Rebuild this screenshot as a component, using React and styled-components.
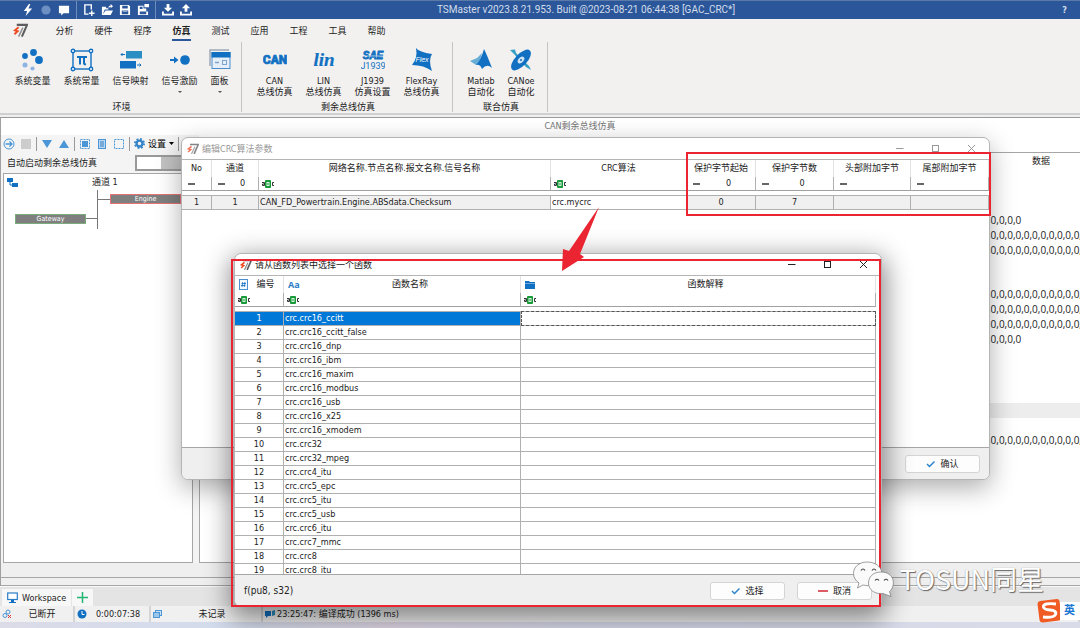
import React from "react"
import styled, { createGlobalStyle } from "styled-components";

const blue = "#1170c2";
const lightBlue = "#4a96d6";
const red = "#ea2430";

const GlobalStyle = createGlobalStyle`
  * { box-sizing: border-box; }
  body {
    margin: 0;
    overflow: hidden;
    background: #efefef;
    color: #222;
    font: 9px/14px "DejaVu Sans Condensed", "Open Sans", "Noto Sans CJK SC", sans-serif;
  }
  button, input { font: inherit; color: inherit; }
  button {
    margin: 0;
    padding: 0;
    border: 0;
    background: none;
  }
  svg { display: block; flex: none; }
`;

const Page = styled.div`
  position: relative;
  display: flex;
  flex-direction: column;
  min-height: 100vh;
  overflow: hidden;
`;

/* title bar */

const TitleBar = styled.header`
  display: flex;
  align-items: center;
  height: 19px;
  background: #2b579a;
  border-top: 1px solid #5b7aa8;
  color: #d3ddec;
`;

const QuickTools = styled.div`
  display: flex;
  align-items: center;
  height: 18px;
  gap: 4px;
  padding: 0 5px;
  border-right: ${p => (p.$last ? "0" : "1px solid #6d8bbb")};
  &:first-child { padding-left: 21px; }
`;

const QuickButton = styled.button`
  display: flex;
  justify-content: center;
  width: 14px;
`;

const AppTitle = styled.h1`
  flex: 1;
  margin: 0;
  font: 400 10px/14px Roboto, "Noto Sans CJK SC", sans-serif;
  text-align: center;
  white-space: nowrap;
`;

const Help = styled.button`
  width: 106px;
  padding-right: 13px;
  font-weight: 700;
  text-align: right;
`;

/* ribbon */

const TabRow = styled.nav`
  display: flex;
  align-items: center;
  height: 23px;
  padding-left: 13px;
  background: #f2f1f0;
`;

const Tabs = styled.div`
  display: flex;
  margin-left: 17px;
`;

const Tab = styled.button`
  display: flex;
  justify-content: center;
  width: 39px;
  padding-top: 3px;
  font-weight: ${p => (p.$active ? 700 : 400)};
  span {
    line-height: 16px;
    border-bottom: 2px solid ${p => (p.$active ? "#2b579a" : "transparent")};
  }
`;

const Ribbon = styled.section`
  display: flex;
  height: 73px;
  background: #f2f1f0;
  border-bottom: 2px solid #d0d0d0;
`;

const RibbonGroup = styled.div`
  display: flex;
  flex-direction: column;
  justify-content: space-between;
  height: 70px;
  padding: 6px 6px 0 8px;
  border-right: 1px solid #c4c4c4;
  text-align: center;
`;

const RibbonItems = styled.div`
  display: flex;
`;

const RibbonItem = styled.button`
  display: flex;
  flex-direction: column;
  align-items: center;
  width: ${p => p.$width || 49}px;
  line-height: 11px;
  white-space: pre-line;
  svg { margin-bottom: 4px; }
`;

const Caret = styled.i`
  margin-top: 4px;
  border: 2px solid transparent;
  border-top-color: #555;
  border-bottom: 0;
`;

const GroupName = styled.div`
  line-height: 10px;
`;

/* work area */

const Main = styled.main`
  display: flex;
  flex: 1;
  flex-direction: column;
  background: #fff;
  border-top: 1px solid #9a9a9a;
  border-left: 1px solid #a0a0a0;
  margin-top: 2px;
`;

const Caption = styled.h2`
  margin: 0;
  padding-left: 79px;
  font-size: 9px;
  font-weight: 400;
  line-height: 17px;
  color: #777;
  text-align: center;
`;

const Panes = styled.div`
  display: flex;
  flex: 1;
  gap: 6px;
  background: #f4f4f4;
`;

const Side = styled.div`
  display: flex;
  flex-direction: column;
  width: 192px;
  padding-left: 2px;
`;

const Toolbar = styled.div`
  display: flex;
  align-items: center;
  height: 17px;
`;

const ToolGroup = styled.div`
  display: flex;
  align-items: center;
  gap: 5px;
  height: 14px;
  padding: 0 4px;
  border-right: 1px solid #999;
  &:first-child { padding-left: 0; }
`;

const ToolButton = styled.button`
  display: flex;
  align-items: center;
  gap: 3px;
  color: #000;
`;

const SwitchLabel = styled.label`
  display: flex;
  align-items: center;
  justify-content: space-between;
  height: 21px;
  padding: 0 0 0 4px;
`;

const Switch = styled.input`
  appearance: none;
  width: 58px;
  height: 16px;
  margin: 0;
  border: 2px solid #999;
  background: linear-gradient(90deg, #fff 24px, #c2c2c2 24px);
`;

const Diagram = styled.div`
  position: relative;
  flex: 1;
  border: 1px solid #a6a6a6;
  background: #fff;
  overflow: hidden;
`;

const ChannelName = styled.span`
  position: absolute;
  left: 88px;
  top: 1px;
`;

const TreeIcon = styled.svg`
  position: absolute;
  left: 3px;
  top: 4px;
`;

const Wires = styled.svg`
  position: absolute;
  left: 82px;
  top: 16px;
`;

const Node = styled.div`
  position: absolute;
  left: ${p => p.$x}px;
  top: ${p => p.$y}px;
  width: 71px;
  height: 10px;
  border: 1px solid ${p => p.$edge};
  background: #7f7f7f;
  color: #fff;
  font-size: 7px;
  line-height: 8px;
  text-align: center;
`;

const DataPane = styled.div`
  display: flex;
  flex: 1;
  flex-direction: column;
  padding-top: 17px;
  overflow: hidden;
  background: #fff;
`;

const DataBox = styled.div`
  display: flex;
  flex: 1;
  flex-direction: column;
  border: 1px solid #a6a6a6;
  border-right: 0;
`;

const DataHead = styled.div`
  align-self: flex-end;
  width: 91px;
  padding-left: 13px;
  margin-bottom: 43px;
  line-height: 17px;
  text-align: center;
`;

const DataRows = styled.div`
  padding-left: calc(100% - 92px);
  margin-bottom: ${p => p.$after}px;
  font: 10px/15px "Open Sans", sans-serif;
  white-space: nowrap;
  background: ${p => (p.$band ? "#ededed" : "none")};
  min-height: 15px;
`;

const Splitter = styled.div`
  height: ${p => p.$height}px;
  background: #efefef;
  border-bottom: 1px solid #a6a6a6;
`;

/* bottom bars */

const WorkspaceBar = styled.div`
  display: flex;
  height: 20px;
  padding: 2px 0 0 2px;
  gap: 1px;
  background: #e4e4e4;
  border-top: 1px solid #f8f8f8;
`;

const WorkspaceTab = styled.button`
  display: flex;
  align-items: center;
  gap: 4px;
  padding: 0 5px;
  background: #f7f7f7;
`;

const StatusBar = styled.footer`
  display: flex;
  height: 16px;
  background: #f0f0f0;
`;

const StatusCell = styled.div`
  display: flex;
  align-items: center;
  width: ${p => (p.$width ? p.$width + "px" : "auto")};
  flex: ${p => (p.$width ? "none" : 1)};
  gap: 2px;
  padding: 0 2px;
  border-right: 2px solid #d4d4d4;
  span {
    flex: ${p => (p.$width ? 1 : "none")};
    text-align: center;
    white-space: nowrap;
  }
`;

const Taskbar = styled.div`
  height: 6px;
  background: linear-gradient(90deg, #dcdbe8, #d3dcec 20%, #e0d8e6 36%, #d6d9ea 55%, #dadbe8);
`;

/* windows */

const Window = styled.section`
  position: absolute;
  left: ${p => p.$left}px;
  right: ${p => p.$right}px;
  top: ${p => p.$top}px;
  display: flex;
  flex-direction: column;
  overflow: hidden;
  border: 1px solid #b4b4b4;
  border-radius: 7px;
  background: #fff;
  box-shadow: 0 8px 26px ${p => (p.$active ? 4 : 0)}px rgba(0, 0, 0, ${p => (p.$active ? 0.45 : 0.32)});
`;

const WindowTitle = styled.header`
  display: flex;
  align-items: center;
  gap: 3px;
  height: 22px;
  padding-left: 5px;
  border-bottom: 1px solid #b5b5b5;
  color: ${p => (p.$active ? "#222" : "#999")};
  h3 {
    flex: 1;
    margin: 0;
    font-size: 9px;
    font-weight: 400;
  }
`;

const WindowButtons = styled.div`
  display: flex;
  button {
    display: flex;
    align-items: center;
    justify-content: center;
    width: 36px;
    height: 20px;
  }
`;

const WindowBody = styled.div`
  height: ${p => p.$height}px;
  padding-right: ${p => p.$gutter || 0}px;
  overflow: hidden;
  border-bottom: 1px solid #a6a6a6;
`;

const WindowFooter = styled.footer`
  display: flex;
  align-items: center;
  gap: 12px;
  height: 31px;
  padding: 0 9px;
  background: #efefef;
  span { flex: 1; font-size: 10px; }
`;

const PushButton = styled.button`
  display: flex;
  align-items: center;
  justify-content: center;
  gap: 5px;
  width: 75px;
  height: 18px;
  border: 1px solid #d4d4d4;
  border-radius: 3px;
  background: #fdfdfd;
`;

const Grid = styled.table`
  width: 100%;
  table-layout: fixed;
  border-collapse: separate;
  border-spacing: 0;
  th, td {
    height: 14px;
    padding: 0;
    font-weight: 400;
    line-height: 13px;
    white-space: nowrap;
    text-align: center;
    border-right: 1px solid #b0b0b0;
  }
  thead tr:first-child th { height: 17px; border-right-color: #e2e2e2; }
  thead tr:last-child td { border-bottom: 1px solid #a0a0a0; }
  tbody::before {
    content: "";
    display: block;
    height: 4px;
  }
  tbody td { border-bottom: 1px solid #b0b0b0; }
  tbody tr:first-child td { border-top: 1px solid #b0b0b0; }
`;

const HeadCell = styled.div`
  display: flex;
  align-items: center;
  padding-left: 4px;
  span { flex: 1; }
`;

const FilterCell = styled.div`
  display: flex;
  align-items: center;
  padding-left: 3px;
  span { flex: 1; }
`;

const Cell = styled.td`
  && { text-align: ${p => (p.$left ? "left" : "center")}; }
  && { padding-left: ${p => (p.$left ? 1 : 0)}px; }
  background: ${p => (p.$selected ? "#0078d7" : p.$shade ? "#f0f0f0" : "#fff")};
  color: ${p => (p.$selected ? "#fff" : "inherit")};
  outline: ${p => (p.$focus ? "1px dashed #555" : "none")};
  outline-offset: -1px;
`;

/* marks over the windows */

const RedFrame = styled.div`
  position: absolute;
  left: ${p => p.$left}px;
  right: ${p => p.$right}px;
  top: ${p => p.$top}px;
  height: ${p => p.$height}px;
  border: 2px solid ${red};
  pointer-events: none;
`;

const Arrow = styled.svg`
  position: absolute;
  left: 558px;
  top: 204px;
  pointer-events: none;
`;

const Watermark = styled.div`
  position: absolute;
  right: 36px;
  bottom: 29px;
  display: flex;
  align-items: center;
  gap: 4px;
  color: #fff;
  font: 27px/40px "Noto Sans CJK SC", sans-serif;
  text-shadow: 1px 1px 1px #666, 0 0 1px #888;
`;

const InputMethod = styled.div`
  position: absolute;
  right: 0;
  bottom: 5px;
  display: flex;
  align-items: center;
  span {
    width: 20px;
    margin-left: -2px;
    padding-left: 4px;
    background: #fff;
    color: #1a76d2;
    font-size: 11px;
    font-weight: 700;
    line-height: 18px;
  }
`;

const Logo = ({ size = 14, faded }) => (
  <svg width={size} height={size} viewBox="0 0 16 16" opacity={faded ? 0.75 : 1}>
    <path d="M4 2H15L9.500 14.500" fill="none" stroke="#5d5d60" strokeWidth="2.200" />
    <path d="M10.500 5L6 14.500" fill="none" stroke="#8d8d90" strokeWidth="1.600" />
    <path d="M6 4.500L2 7.800L5 8.800L1.500 12" fill="none" stroke="#ee4a22" strokeWidth="2" />
  </svg>
);

const white = "#fff";

const quickIcons = {
  bolt: <path d="M7.5 0L2 7.5H5.5L4 13L11 5H7L9 0z" fill={white} />,
  record: <circle cx="6.5" cy="6.5" r="5" fill="#6e8fc3" />,
  chat: <path d="M1 2H12V10H6L3.500 12.500V10H1z" fill={white} />,
  create: <g fill="none" stroke={white} strokeWidth="1.5"><path d="M6 11H2V1H9V6" /><path d="M9.5 7V13M6.5 10H12.5" /></g>,
  open: <path d="M1 12V3H5L6 4.500H8V6H4L2 11L5 7H13L10.500 12zM8 4Q8 1.500 10.500 1.500V0L13 2.500L10.500 4.500V3Q9 3 9 4z" fill={white} />,
  save: <path fillRule="evenodd" d="M1 1H10.5L12 2.500V12H1zM3.500 2V5H9.500V2zM3 7V11H10V7zM4 8H9V8.800H4z" fill={white} />,
  saveAs: <path fillRule="evenodd" d="M1 2H7V5H10V8H12V12H1zM3 3V5.500H6V3zM3 8V11H10V8zM8 0H13V3.500H8z" fill={white} />,
  download: <g fill={white}><path d="M5 0H8V4H11L6.500 8.500L2 4H5z" /><path d="M0 8H2V10.500H11V8H13V12.500H0z" /></g>,
  upload: <g fill={white}><path d="M5 8.500H8V4.500H11L6.500 0L2 4.500H5z" /><path d="M0 8H2V10.500H11V8H13V12.500H0z" /></g>
};

const QuickIcon = ({ name }) => (
  <QuickButton aria-label={name}>
    <svg width="12" height="12" viewBox="0 0 13 13">{quickIcons[name]}</svg>
  </QuickButton>
);

const ribbonIcons = {
  variable: (
    <g fill={blue}>
      <circle cx="12.500" cy="4.500" r="3.400" />
      <circle cx="4" cy="8" r="2.900" />
      <circle cx="18" cy="12" r="3.900" />
      <circle cx="4" cy="17" r="2.500" fill="#8db4e2" />
      <circle cx="11.500" cy="20.500" r="2.100" fill="#8db4e2" />
    </g>
  ),
  constant: (
    <g fill="none" stroke={blue} strokeWidth="1.400">
      <rect x="3" y="3" width="18" height="18" />
      <g fill="#fff"><circle cx="3" cy="3" r="1.700" /><circle cx="21" cy="3" r="1.700" /><circle cx="3" cy="21" r="1.700" /><circle cx="21" cy="21" r="1.700" /></g>
      <path d="M7 9H17M10 9V16.500M14 9V15Q14 16.500 16 16.200" strokeWidth="2" />
    </g>
  ),
  mapping: (
    <g fill={blue}>
      <rect x="7" y="3" width="16" height="7.500" fill="#2b8fc4" />
      <rect x="1" y="13" width="16" height="7.500" />
      <path d="M6 6.500H2M3.500 5L2 6.500L3.500 8M18 17H22M20.500 15.500L22 17L20.500 18.500" fill="none" stroke={blue} />
    </g>
  ),
  stimulus: (
    <g fill={blue}>
      <circle cx="17" cy="12" r="4.800" />
      <path d="M2 11H6V8.500L10.500 12L6 15.500V13H2z" />
    </g>
  ),
  panel: (
    <g>
      <path d="M2 18V2H21" fill="none" stroke="#9aa9b8" strokeWidth="1.500" />
      <rect x="4" y="4.500" width="18" height="16" fill="#e6eef7" stroke="#4b8dcc" />
      <rect x="3.500" y="4" width="19" height="5.500" fill={blue} />
      <path d="M7 14.500H11" stroke="#7da5cf" strokeWidth="1.500" />
      <rect x="14.500" y="12.500" width="4" height="4" fill="none" stroke="#7da5cf" />
    </g>
  ),
  can: <text x="12" y="16" textAnchor="middle" fill={blue} stroke={blue} strokeWidth=".7" fontFamily="Roboto, sans-serif" fontWeight="900" fontSize="12">CAN</text>,
  lin: <text x="12" y="18" textAnchor="middle" fill={blue} stroke={blue} strokeWidth=".2" fontFamily="'Liberation Serif', serif" fontStyle="italic" fontWeight="700" fontSize="19">lin</text>,
  j1939: (
    <g fill={blue} textAnchor="middle">
      <text x="12" y="10.500" fontFamily="'Liberation Sans', sans-serif" fontWeight="700" fontStyle="italic" fontSize="10" stroke={blue} strokeWidth=".8">SAE</text>
      <path d="M1 8H22" stroke="#f2f1f0" strokeWidth=".6" />
      <text x="12" y="20.500" fontFamily="Roboto, sans-serif" fontSize="9">J1939</text>
    </g>
  ),
  flexray: (
    <g>
      <path d="M6 0Q9 4 22 6Q18 12 22 23Q14 17 2 17Q8 10 6 0z" fill={blue} />
      <text x="12" y="14" textAnchor="middle" fill="#fff" fontFamily="'Liberation Sans', sans-serif" fontStyle="italic" fontSize="7">Flex</text>
    </g>
  ),
  matlab: (
    <g>
      <path d="M1 13L8 10L13 5L10 16L7 17z" fill="#67add5" />
      <path d="M7 17Q12 12 15 1Q18 7 23 20Q18 15 13 21Q11 16 7 17z" fill={blue} />
    </g>
  ),
  canoe: (
    <g>
      <path d="M1 2L6 1.500L7 5L20 18L22 22L17 19L5 6z" fill="#35a0c4" />
      <ellipse cx="12" cy="12" rx="13" ry="6" transform="rotate(-47 12 12)" fill={blue} />
      <ellipse cx="12" cy="12" rx="4" ry="2.600" transform="rotate(-47 12 12)" fill="#cfe2f2" />
      <circle cx="12" cy="12" r="1" fill={blue} />
    </g>
  )
};

const tabs = ["分析", "硬件", "程序", "仿真", "测试", "应用", "工程", "工具", "帮助"];

const groups = [
  {
    name: "环境",
    items: [
      { icon: "variable", label: "系统变量" },
      { icon: "constant", label: "系统常量" },
      { icon: "mapping", label: "信号映射" },
      { icon: "stimulus", label: "信号激励", menu: true },
      { icon: "panel", label: "面板", menu: true, width: 31 }
    ]
  },
  {
    name: "剩余总线仿真",
    items: [
      { icon: "can", label: "CAN\n总线仿真" },
      { icon: "lin", label: "LIN\n总线仿真" },
      { icon: "j1939", label: "J1939\n仿真设置" },
      { icon: "flexray", label: "FlexRay\n总线仿真" }
    ]
  },
  {
    name: "联合仿真",
    items: [
      { icon: "matlab", label: "Matlab\n自动化", width: 40 },
      { icon: "canoe", label: "CANoe\n自动化", width: 40 }
    ]
  }
];

const functions = [
  "crc.crc16_ccitt", "crc.crc16_ccitt_false", "crc.crc16_dnp", "crc.crc16_ibm", "crc.crc16_maxim",
  "crc.crc16_modbus", "crc.crc16_usb", "crc.crc16_x25", "crc.crc16_xmodem", "crc.crc32",
  "crc.crc32_mpeg", "crc.crc4_itu", "crc.crc5_epc", "crc.crc5_itu", "crc.crc5_usb",
  "crc.crc6_itu", "crc.crc7_mmc", "crc.crc8", "crc.crc8_itu"
];

const shortData = ",0,0,0,0";
const longData = ",0,0,0,0,0,0,0,0,0,0,0,";

const columns = [
  { title: "No", width: 30, filter: "equal", value: "", cell: "1" },
  { title: "通道", width: 47, filter: "equal", value: "0", cell: "1" },
  { title: "网络名称.节点名称.报文名称.信号名称", filter: "text", cell: "CAN_FD_Powertrain.Engine.ABSdata.Checksum", left: true },
  { title: "CRC算法", width: 136, filter: "text", cell: "crc.mycrc", left: true, editable: true },
  { title: "保护字节起始", width: 69, filter: "equal", value: "0", cell: "0" },
  { title: "保护字节数", width: 78, filter: "equal", value: "0", cell: "7" },
  { title: "头部附加字节", width: 77, filter: "equal", value: "", cell: "" },
  { title: "尾部附加字节", width: 78, filter: "equal", value: "", cell: "" }
];

const FilterIcon = ({ type }) =>
  type === "equal" ? (
    <svg width="12" height="10" viewBox="0 0 12 10"><path d="M3 5H10" stroke="#666" strokeWidth="2" /></svg>
  ) : (
    <svg width="12" height="10" viewBox="0 0 12 10">
      <path d="M0 3.500H2.500V6.500H0.500V5H2.500" fill="none" stroke="#333" />
      <rect x="3" y="1" width="6" height="8" rx="1" fill="#189a3a" />
      <rect x="5" y="3.500" width="2" height="3" fill="none" stroke="#d6f2dc" />
      <path d="M12 3.500H10.500V6.500H12" fill="none" stroke="#333" />
    </svg>
  );

const Check = () => (
  <svg width="9" height="8" viewBox="0 0 9 8"><path d="M1 4L3.500 6.500L8.500 1.500" fill="none" stroke="#2c84cc" strokeWidth="1.500" /></svg>
);

const Minus = () => (
  <svg width="10" height="8" viewBox="0 0 10 8"><path d="M0 4H10" stroke="#d22630" strokeWidth="1.600" /></svg>
);

const WindowControls = () => (
  <WindowButtons>
    <button aria-label="minimize"><svg width="9" height="9"><path d="M1 4.500H8.500" stroke="currentColor" /></svg></button>
    <button aria-label="maximize"><svg width="9" height="9"><rect x="1.500" y="1.500" width="6" height="6" fill="none" stroke="currentColor" /></svg></button>
    <button aria-label="close"><svg width="9" height="9"><path d="M1 1L8 8M8 1L1 8" stroke="currentColor" /></svg></button>
  </WindowButtons>
);

const SideToolbar = () => (
  <Toolbar>
    <ToolGroup>
      <ToolButton aria-label="run">
        <svg width="12" height="12" viewBox="0 0 12 12" fill="none" stroke={lightBlue}><circle cx="6" cy="6" r="5" /><path d="M2.500 6H9M6.500 3.500L9 6L6.500 8.500" strokeWidth="1.300" /></svg>
      </ToolButton>
      <ToolButton aria-label="stop"><svg width="12" height="12"><rect x="1" y="1" width="10" height="10" fill="#ccc" /></svg></ToolButton>
    </ToolGroup>
    <ToolGroup>
      <ToolButton aria-label="down"><svg width="12" height="12"><path d="M1 2H11L6 10z" fill={lightBlue} /></svg></ToolButton>
      <ToolButton aria-label="up"><svg width="12" height="12"><path d="M1 10H11L6 2z" fill={lightBlue} /></svg></ToolButton>
    </ToolGroup>
    <ToolGroup>
      <ToolButton aria-label="all">
        <svg width="12" height="12"><rect x="1.500" y="1.500" width="9" height="9" fill="none" stroke={lightBlue} strokeDasharray="2 1" /><rect x="3" y="3" width="6" height="6" fill={lightBlue} /></svg>
      </ToolButton>
      <ToolButton aria-label="list">
        <svg width="12" height="12"><rect x="2.500" y="1.500" width="7" height="9" fill="#bcd8f0" stroke={lightBlue} /><path d="M4 4H8M4 6H8M4 8H8" stroke="#2f7fc4" /></svg>
      </ToolButton>
      <ToolButton aria-label="none">
        <svg width="12" height="12"><rect x="1.500" y="1.500" width="9" height="9" fill="none" stroke={lightBlue} strokeDasharray="2 1" /></svg>
      </ToolButton>
    </ToolGroup>
    <ToolGroup>
      <ToolButton>
        <svg width="11" height="11" viewBox="0 0 12 12"><circle cx="6" cy="6" r="3.200" fill="none" stroke="#3585c8" strokeWidth="2.600" /><circle cx="6" cy="6" r="5" fill="none" stroke="#3585c8" strokeWidth="2" strokeDasharray="2 1.930" /></svg>
        设置
        <svg width="5" height="3"><path d="M0 0H5L2.500 3z" /></svg>
      </ToolButton>
    </ToolGroup>
  </Toolbar>
);

const CrcWindow = () => (
  <Window $left={181} $right={90} $top={137}>
    <WindowTitle>
      <Logo size={12} faded />
      <h3>编辑CRC算法参数</h3>
      <WindowControls />
    </WindowTitle>
    <WindowBody $height={288}>
      <Grid>
        <colgroup>
          {columns.map(c => <col key={c.title} width={c.width} />)}
        </colgroup>
        <thead>
          <tr>{columns.map(c => <th key={c.title}>{c.title}</th>)}</tr>
          <tr>
            {columns.map(c => (
              <td key={c.title}>
                <FilterCell><FilterIcon type={c.filter} /><span>{c.value}</span></FilterCell>
              </td>
            ))}
          </tr>
        </thead>
        <tbody>
          <tr>
            {columns.map(c => (
              <Cell key={c.title} $left={c.left} $shade={!c.editable}>{c.cell}</Cell>
            ))}
          </tr>
        </tbody>
      </Grid>
    </WindowBody>
    <WindowFooter>
      <span />
      <PushButton><Check />确认</PushButton>
    </WindowFooter>
  </Window>
);

const FunctionWindow = () => (
  <Window $left={234} $right={198} $top={253} $active>
    <WindowTitle $active>
      <Logo size={12} />
      <h3>请从函数列表中选择一个函数</h3>
      <WindowControls />
    </WindowTitle>
    <WindowBody $height={299} $gutter={5}>
      <Grid>
        <colgroup>
          <col width="49" />
          <col width="237" />
          <col />
        </colgroup>
        <thead>
          <tr>
            <th>
              <HeadCell>
                <svg width="9" height="11" viewBox="0 0 9 11"><rect x=".5" y=".5" width="8" height="10" fill="#f4f9ff" stroke="#4a90d0" /><path d="M3.700 3L3 8M6 3L5.300 8M2.500 4.500H7M2 6.500H6.500" stroke={blue} strokeWidth=".8" /></svg>
                <span>编号</span>
              </HeadCell>
            </th>
            <th>
              <HeadCell>
                <svg width="12" height="11"><text x="0" y="9" fill="#2a7cc7" fontFamily="'Open Sans', sans-serif" fontWeight="700" fontSize="9">Aa</text></svg>
                <span>函数名称</span>
              </HeadCell>
            </th>
            <th>
              <HeadCell>
                <svg width="11" height="10"><path d="M0 1H4L5 2H10V9H0z" fill={blue} /><path d="M0 3.500H10" stroke="#8fc0ea" strokeWidth=".7" /></svg>
                <span>函数解释</span>
              </HeadCell>
            </th>
          </tr>
          <tr>
            {[0, 1, 2].map(i => <td key={i}><FilterCell><FilterIcon type="text" /></FilterCell></td>)}
          </tr>
        </thead>
        <tbody>
          {functions.map((name, i) => (
            <tr key={name}>
              <Cell $selected={i === 0}>{i + 1}</Cell>
              <Cell $left $selected={i === 0}>{name}</Cell>
              <Cell $focus={i === 0} />
            </tr>
          ))}
        </tbody>
      </Grid>
    </WindowBody>
    <WindowFooter>
      <span>f(pu8, s32)</span>
      <PushButton><Check />选择</PushButton>
      <PushButton><Minus />取消</PushButton>
    </WindowFooter>
  </Window>
);

export default function App() {
  return (
    <Page>
      <GlobalStyle />
      <TitleBar>
        <QuickTools>
          <QuickIcon name="bolt" />
          <QuickIcon name="record" />
          <QuickIcon name="chat" />
        </QuickTools>
        <QuickTools>
          <QuickIcon name="create" />
          <QuickIcon name="open" />
          <QuickIcon name="save" />
          <QuickIcon name="saveAs" />
        </QuickTools>
        <QuickTools $last>
          <QuickIcon name="download" />
          <QuickIcon name="upload" />
        </QuickTools>
        <AppTitle>TSMaster v2023.8.21.953. Built @2023-08-21 06:44:38 [GAC_CRC*]</AppTitle>
        <Help>?</Help>
      </TitleBar>
      <TabRow>
        <Logo size={15} />
        <Tabs>
          {tabs.map(t => <Tab key={t} $active={t === "仿真"}><span>{t}</span></Tab>)}
        </Tabs>
      </TabRow>
      <Ribbon>
        {groups.map(g => (
          <RibbonGroup key={g.name}>
            <RibbonItems>
              {g.items.map(item => (
                <RibbonItem key={item.label} $width={item.width}>
                  <svg width="24" height="24" viewBox="0 0 24 24">{ribbonIcons[item.icon]}</svg>
                  {item.label}
                  {item.menu && <Caret />}
                </RibbonItem>
              ))}
            </RibbonItems>
            <GroupName>{g.name}</GroupName>
          </RibbonGroup>
        ))}
      </Ribbon>

      <Main>
        <Caption>CAN剩余总线仿真</Caption>
        <Panes>
          <Side>
            <SideToolbar />
            <SwitchLabel>
              自动启动剩余总线仿真
              <Switch type="checkbox" />
            </SwitchLabel>
            <Diagram>
              <TreeIcon width="11" height="9"><path d="M0 0H6V4H0zM5 5H11V9H5z" fill={blue} /><path d="M3 4V7H5" fill="none" stroke={blue} /></TreeIcon>
              <ChannelName>通道 1</ChannelName>
              <Wires width="25" height="40"><path d="M11.500 0V39M12 9.500H25M0 28.500H11" fill="none" stroke="#777" /></Wires>
              <Node $x={106} $y={20} $edge="#e57373">Engine</Node>
              <Node $x={11} $y={40} $edge="#7cab7c">Gateway</Node>
            </Diagram>
          </Side>
          <DataPane>
            <DataBox>
              <DataHead>数据</DataHead>
              <DataRows $after={29}>
                <div>{shortData}</div>
                <div>{longData}</div>
                <div>{longData}</div>
              </DataRows>
              <DataRows $after={56}>
                <div>{longData}</div>
                <div>{longData}</div>
                <div>{longData}</div>
                <div>{shortData}</div>
              </DataRows>
              <DataRows $band $after={15} />
              <DataRows $after={0}>{longData}</DataRows>
            </DataBox>
          </DataPane>
        </Panes>
        <Splitter $height={15} />
        <Splitter $height={8} />
      </Main>

      <WorkspaceBar>
        <WorkspaceTab>
          <svg width="11" height="11" viewBox="0 0 11 11"><rect x=".7" y="1" width="9.600" height="6.500" fill="#fff" stroke="#2a7cc7" strokeWidth="1.200" /><path d="M4 8H7V10H9V11H2V10H4z" fill={blue} /></svg>
          Workspace
        </WorkspaceTab>
        <WorkspaceTab aria-label="add">
          <svg width="11" height="11"><path d="M5.500 0V11M0 5.500H11" stroke="#22b573" strokeWidth="1.500" /></svg>
        </WorkspaceTab>
      </WorkspaceBar>
      <StatusBar>
        <StatusCell $width={75}>
          <svg width="9" height="10" viewBox="0 0 9 10" fill="none" stroke={lightBlue}><circle cx="6" cy="3" r="2" /><circle cx="3" cy="6.500" r="2" /><path d="M6 6L9 9M9 6L6 9" stroke="#d33" /></svg>
          <span>已断开</span>
        </StatusCell>
        <StatusCell $width={76}>
          <svg width="10" height="10"><circle cx="5" cy="5" r="4.500" fill={blue} /><path d="M5 2V5.500H7.500" fill="none" stroke="#fff" /></svg>
          <span>0:00:07:38</span>
        </StatusCell>
        <StatusCell $width={112}>
          <svg width="10" height="10"><rect x="2.500" y="1.500" width="6" height="5" fill="#cfe2f3" stroke={lightBlue} /><rect x=".5" y="3.500" width="6" height="5" fill="#9cc5ea" stroke={lightBlue} /></svg>
          <span>未记录</span>
        </StatusCell>
        <StatusCell>
          <svg width="10" height="9"><path d="M0 1H6V6H3L1 8V6H0z" fill={blue} /><path d="M7 1L10 0V5L7 6z" fill="#2b8fc4" /></svg>
          <span>23:25:47: 编译成功 (1396 ms)</span>
        </StatusCell>
      </StatusBar>
      <Taskbar />

      <CrcWindow />
      <FunctionWindow />
      <RedFrame $left={686} $right={89} $top={152} $height={64} />
      <RedFrame $left={231} $right={199} $top={259} $height={348} />
      <Arrow width="46" height="70" viewBox="0 0 46 70"><path d="M41 3L22 50L26 53L4 67L5 45L11 47z" fill={red} /></Arrow>
      <Watermark>
        <svg width="42" height="36" viewBox="0 0 42 36" fill="#fafafa" stroke="#777" strokeWidth=".7">
          <path d="M14 1C6 1 .5 6 .5 12.500C.5 16.500 2.500 19.500 6 22L4.500 27L10 24C22 27 29 20 29 12C28 5 22 1 14 1z" />
          <path d="M28 11C20 11 15.500 16 15.500 22C15.500 29 22 33.500 30 32.500L38 35.500L36.500 30.500C43 25 42 11 28 11z" />
          <path d="M8 9.500Q10 6.500 12 9.500M19 9.500Q21 6.500 23 9.500M22 19.500Q24 17 26 19.500M31 19.500Q33 17 35 19.500" fill="none" stroke="#444" strokeWidth="1.200" />
        </svg>
        TOSUN同星
      </Watermark>
      <InputMethod>
        <svg width="25" height="24" viewBox="0 0 25 24">
          <path d="M3 2L20 0Q22 0 22.500 2L24.500 18Q24.500 21 22 21.500L6 23.500Q3 23.500 2.500 21L.5 5Q.5 2.500 3 2z" fill="#f05a23" />
          <path d="M19 5Q6 3.500 6.500 8Q7 10.500 13 11Q20 11.500 18.500 15.500Q17 19 6 18" fill="none" stroke="#fff" strokeWidth="3" />
        </svg>
        <span>英</span>
      </InputMethod>
    </Page>
  )
}
